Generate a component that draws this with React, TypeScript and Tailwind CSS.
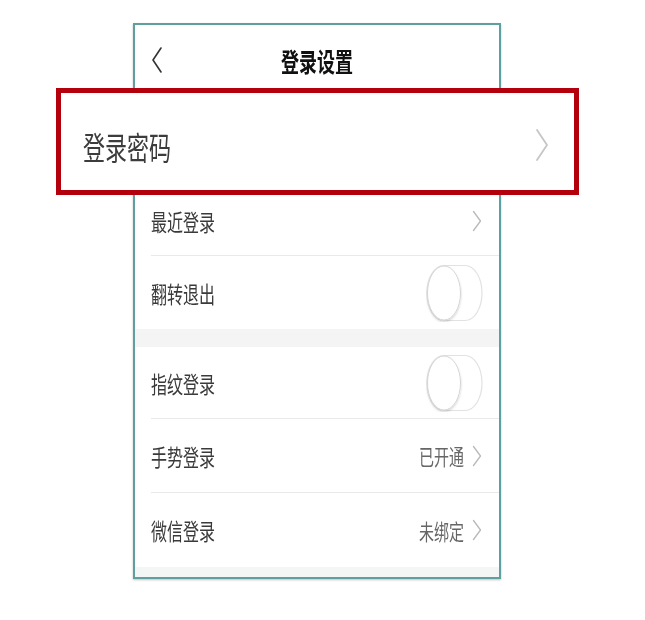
const font = { fontFamily: '"Noto Sans CJK SC", "Noto Sans", sans-serif' };

function Chevron({ big = false }: { big?: boolean }) {
  if (big) {
    return (
      <svg width="14" height="34" viewBox="0 0 14 34" fill="none">
        <path d="M2 2 L12 17 L2 32" stroke="#c6c6c6" strokeWidth="1.8" strokeLinecap="round" strokeLinejoin="round" />
      </svg>
    );
  }
  return (
    <svg width="10" height="22" viewBox="0 0 10 22" fill="none">
      <path d="M1.5 1.5 L8.5 11 L1.5 20.5" stroke="#b9b9b9" strokeWidth="1.3" strokeLinecap="round" strokeLinejoin="round" />
    </svg>
  );
}

function Toggle() {
  return (
    <svg width="58" height="58" viewBox="0 0 58 58" fill="none">
      <defs>
        <filter id="kn" x="-30%" y="-30%" width="160%" height="160%">
          <feDropShadow dx="0" dy="1.5" stdDeviation="1.2" floodColor="#000" floodOpacity="0.18" />
        </filter>
      </defs>
      <path d="M18 1.5 H39 A17 27.5 0 0 1 39 56.5 H18 A17 27.5 0 0 1 18 1.5 Z" fill="#fff" stroke="#e2e2e2" strokeWidth="1.2" />
      <ellipse cx="18" cy="29" rx="16.5" ry="27" fill="#fff" stroke="#d6d6d6" strokeWidth="1" filter="url(#kn)" />
    </svg>
  );
}

function Label({ text, size = "text-[16px]", color = "text-[#3a3a3a]" }: { text: string; size?: string; color?: string }) {
  return <span className={`inline-block leading-none scale-y-[1.45] ${size} ${color}`}>{text}</span>;
}

function Row({ label, right, h, divider = true }: { label: string; right: React.ReactNode; h: string; divider?: boolean }) {
  return (
    <div className="pl-[16px]">
      <div className={`flex items-center justify-between pr-[15px] ${h}`}>
        <Label text={label} />
        {right}
      </div>
      {divider && <div className="h-px bg-[#e9e9e9]" />}
    </div>
  );
}

function Value({ text }: { text: string }) {
  return (
    <div className="flex items-center gap-[8px] pr-[2px]">
      <Label text={text} size="text-[15px]" color="text-[#666]" />
      <Chevron />
    </div>
  );
}

export default function App() {
  return (
    <div className="min-h-[620px] w-[645px] bg-white pt-[23px]" style={font}>
      <div className="ml-[133px] w-[368px] border-2 border-[#5e9fa0] bg-white shadow-[0_1px_2px_rgba(0,0,0,0.25)]">
        {/* nav bar */}
        <div className="relative flex h-[63px] items-center justify-center pt-[7px]">
          <div className="absolute left-[16px] top-[21px]">
            <svg width="12" height="28" viewBox="0 0 12 28" fill="none">
              <path d="M10 2 L2 14 L10 26" stroke="#333" strokeWidth="1.6" strokeLinecap="round" strokeLinejoin="round" />
            </svg>
          </div>
          <span className="inline-block scale-y-[1.45] text-[18px] font-bold leading-none text-[#111]">登录设置</span>
        </div>

        {/* highlighted row */}
        <div className="-ml-[79px] -mr-[80px] flex h-[107px] items-center justify-between border-[5px] border-[#b3000c] bg-white pl-[22px] pr-[25px] pt-[7px]">
          <Label text="登录密码" size="text-[22px]" color="text-[#3c3c3c]" />
          <Chevron big />
        </div>

        <Row label="最近登录" h="h-[60px] pb-[8px]" right={<div className="pr-[2px]"><Chevron /></div>} />
        <Row label="翻转退出" h="h-[73px]" divider={false} right={<Toggle />} />

        <div className="h-[18px] bg-[#f4f4f4]" />

        <Row label="指纹登录" h="h-[71px]" right={<Toggle />} />
        <Row label="手势登录" h="h-[73px]" right={<Value text="已开通" />} />
        <Row label="微信登录" h="h-[74px]" divider={false} right={<Value text="未绑定" />} />

        <div className="h-[10px] bg-[#f3f6f5]" />
      </div>
    </div>
  );
}
